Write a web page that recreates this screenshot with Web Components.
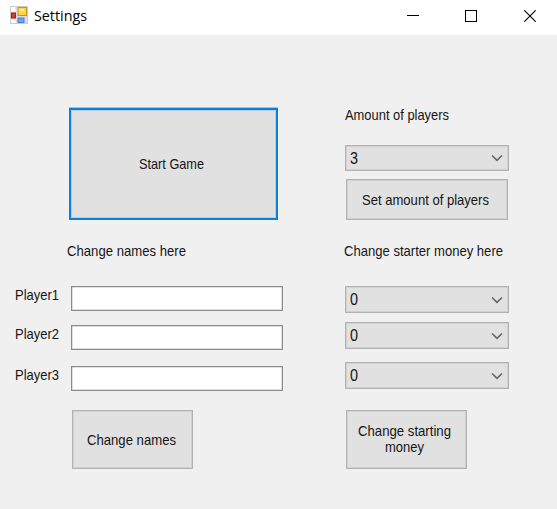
<!DOCTYPE html>
<html lang="en">
<head>
<meta charset="utf-8">
<title>Settings</title>
<style>
html, body { margin: 0; height: 100%; overflow: hidden; background: #f0f0f0; }
</style>
</head>
<body>
<settings-window></settings-window>
<script>
const attach = (host, html) => {
  const t = document.createElement('template');
  t.innerHTML = html;
  const root = host.attachShadow({ mode: 'open' });
  root.append(t.content.cloneNode(true));
  return root;
};

/* One line of text condensed to the width given by the "w" attribute. */
customElements.define('fit-text', class extends HTMLElement {
  connectedCallback() {
    if (this.shadowRoot) return;
    const root = attach(this, `<style>
      :host { display: block; height: 18px; white-space: nowrap; flex: none; }
      span { display: inline-block; line-height: 18px; transform-origin: 0 0; }
    </style><span><slot></slot></span>`);
    const w = +this.getAttribute('w');
    const span = root.querySelector('span');
    this.style.width = w + 'px';
    span.style.transform = `scaleX(${w / span.getBoundingClientRect().width})`;
  }
});

customElements.define('push-button', class extends HTMLElement {
  connectedCallback() {
    if (this.shadowRoot) return;
    attach(this, `<style>
      :host { display: flex; flex-direction: column; align-items: center; justify-content: center;
        box-sizing: border-box; padding-right: 3px; background: #e1e1e1; border: 1px solid #b2b2b2; box-shadow: inset 0 0 0 1px #d0d0d0; }
      :host([primary]) { border: 2px solid #0b7fda; padding: 0 4px 1px 0; box-shadow: inset 0 0 0 1px #b4cfe6, 0 -1px 0 #9cc8ec; }
    </style><slot></slot>`);
  }
});

customElements.define('name-field', class extends HTMLElement {
  connectedCallback() {
    if (this.shadowRoot) return;
    attach(this, `<style>
      :host { display: flex; height: 25px; padding-left: 15px; }
      .label { width: 56px; }
      .box { width: 212px; box-sizing: border-box; background: #fff; border: 1px solid #8c8c8c; box-shadow: inset 0 0 0 .5px #c0c0c0; }
    </style><div class="label"><fit-text w="${this.getAttribute('w')}">${this.getAttribute('label')}</fit-text></div><div class="box"></div>`);
  }
});

customElements.define('drop-down', class extends HTMLElement {
  connectedCallback() {
    if (this.shadowRoot) return;
    attach(this, `<style>
      :host { display: flex; align-items: center; justify-content: space-between; box-sizing: border-box;
        width: 164px; height: 27px; padding: 0 5px 0 4px; background: #e1e1e1; border: 1px solid #b2b2b2; box-shadow: inset 0 0 0 1px #d0d0d0; font-size: 16px; }
      fit-text { margin-top: 1px; }
      svg { display: block; }
    </style><fit-text w="8"><slot></slot></fit-text>
    <svg width="12" height="8" viewBox="0 0 12 8"><path d="M1 1.5 6 6.3 11 1.5" fill="none" stroke="#666" stroke-width="1.6"/></svg>`);
  }
});

customElements.define('title-bar', class extends HTMLElement {
  connectedCallback() {
    if (this.shadowRoot) return;
    attach(this, `<style>
      :host { display: flex; justify-content: space-between; height: 35px; background: #fff; color: #000; }
      .name { display: flex; padding: 6px 0 0 10px; gap: 6px; font: 15px "Open Sans", sans-serif; }
      .name fit-text { margin-top: -1px; }
      .controls { display: flex; padding: 10px 21px 0 0; }
      .min { margin-right: 46px; }
      .max { margin-right: 47px; }
      svg { display: block; }
    </style>
    <div class="name">
      <svg width="18" height="18" viewBox="0 0 18 18">
        <rect x=".5" y=".5" width="17" height="17" fill="#ddd" stroke="#ccc"/>
        <path d="M1 1h4.500v5H1zM1 13.500h5V17H1z" fill="#fff"/>
        <rect x="1.500" y="7" width="4" height="5" fill="#d83a2c" stroke="#a91f18"/>
        <rect x="8" y="1.500" width="8.500" height="8" fill="#ffd54a" stroke="#c89316"/>
        <path d="M9 3h5v2H9z" fill="#ffe88c"/>
        <rect x="8" y="12" width="6" height="4.500" fill="#6ba2f5" stroke="#4c7ed7"/>
      </svg>
      <fit-text w="53"><slot></slot></fit-text>
    </div>
    <div class="controls">
      <svg class="min" width="12" height="13"><path d="M0 5.5h12" stroke="#000"/></svg>
      <svg class="max" width="12" height="12"><rect x=".5" y=".5" width="11" height="11" fill="none" stroke="#000"/></svg>
      <svg width="12" height="12"><path d="m.3.3 11.4 11.4m0-11.4L.3 11.7" stroke="#000" stroke-width="1.1"/></svg>
    </div>`);
  }
});

customElements.define('settings-window', class extends HTMLElement {
  connectedCallback() {
    attach(this, `<style>
      :host { display: block; width: 557px; height: 509px; background: #f0f0f0; color: #151515;
        font: 15px "Liberation Sans", Arial, sans-serif; }
      main { display: flex; }
      section { display: flex; flex-direction: column; align-items: flex-start; }
      .left { width: 344px; padding-top: 73px; }
      .right { padding-top: 71px; }
      .start { width: 209px; height: 112px; margin-left: 69px; }
      .lh { margin: 22px 0 26px 67px; }
      .fields { display: flex; flex-direction: column; }
      .f2 { margin-top: 14px; } .f3 { margin-top: 16px; }
      .names { width: 121px; height: 59px; margin: 19px 0 0 72px; }
      .amount { margin-left: 1px; }
      .count { height: 26px; margin: 21px 0 8px 1px; }
      .set { width: 162px; height: 41px; margin-left: 2px; }
      .rh { margin: 22px 0 26px; }
      .money { margin-left: 1px; }
      .m2 { margin-top: 9px; } .m3 { margin-top: 13px; }
      .change { width: 121px; height: 59px; margin: 21px 0 0 2px; padding: 0 4px 1px 0; }
      .change fit-text + fit-text { margin-top: -2px; }
    </style>
    <title-bar>Settings</title-bar>
    <main>
      <section class="left">
        <push-button primary class="start"><fit-text w="65">Start Game</fit-text></push-button>
        <fit-text class="lh" w="119">Change names here</fit-text>
        <div class="fields">
          <name-field label="Player1" w="44"></name-field>
          <name-field class="f2" label="Player2" w="44"></name-field>
          <name-field class="f3" label="Player3" w="44"></name-field>
        </div>
        <push-button class="names"><fit-text w="89">Change names</fit-text></push-button>
      </section>
      <section class="right">
        <fit-text class="amount" w="104">Amount of players</fit-text>
        <drop-down class="count">3</drop-down>
        <push-button class="set"><fit-text w="127">Set amount of players</fit-text></push-button>
        <fit-text class="rh" w="159">Change starter money here</fit-text>
        <drop-down class="money">0</drop-down>
        <drop-down class="money m2">0</drop-down>
        <drop-down class="money m3">0</drop-down>
        <push-button class="change"><fit-text w="93">Change starting</fit-text><fit-text w="39">money</fit-text></push-button>
      </section>
    </main>`);
  }
});
</script>
</body>
</html>
